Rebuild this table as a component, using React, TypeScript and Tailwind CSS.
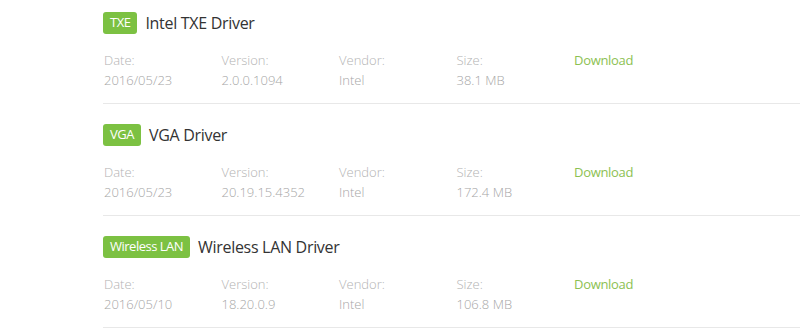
type Driver = {
  tag: string;
  name: string;
  date: string;
  version: string;
  vendor: string;
  size: string;
};

const drivers: Driver[] = [
  { tag: 'TXE', name: 'Intel TXE Driver', date: '2016/05/23', version: '2.0.0.1094', vendor: 'Intel', size: '38.1 MB' },
  { tag: 'VGA', name: 'VGA Driver', date: '2016/05/23', version: '20.19.15.4352', vendor: 'Intel', size: '172.4 MB' },
  { tag: 'Wireless LAN', name: 'Wireless LAN Driver', date: '2016/05/10', version: '18.20.0.9', vendor: 'Intel', size: '106.8 MB' },
];

const Field = ({ label, value }: { label: string; value: string }) => (
  <div className="w-[117.5px] shrink-0">
    <div className="h-5 text-[13px] leading-5 font-light text-[#b3b3b3]">{label}</div>
    <div className="h-5 text-[13px] leading-5 font-light text-[#a6a6a6]">{value}</div>
  </div>
);

export default function App() {
  return (
    <div
      className="h-[331px] w-[800px] overflow-hidden bg-white"
      style={{ fontFamily: '"Open Sans", "Noto Sans", sans-serif' }}
    >
      <div className="-mt-2 ml-[103px]">
        {drivers.map((d) => (
          <div key={d.name} className="border-b border-[#e8e8e8] pt-5 pb-[13px]">
            <div className="flex h-[22px] items-center gap-2">
              <span className="flex h-[22px] items-center rounded-[3px] bg-[#7cc142] px-[7px] text-[13px] tracking-[-0.5px] text-white">
                {d.tag}
              </span>
              <h3 className="text-[16px] font-medium tracking-[-0.3px] text-[#333]">{d.name}</h3>
            </div>
            <div className="mt-4 flex pl-px">
              <Field label="Date:" value={d.date} />
              <Field label="Version:" value={d.version} />
              <Field label="Vendor:" value={d.vendor} />
              <Field label="Size:" value={d.size} />
              <div className="h-5 text-[13px] leading-5 tracking-[-0.3px] text-[#8cc152]">Download</div>
            </div>
          </div>
        ))}
      </div>
    </div>
  );
}
